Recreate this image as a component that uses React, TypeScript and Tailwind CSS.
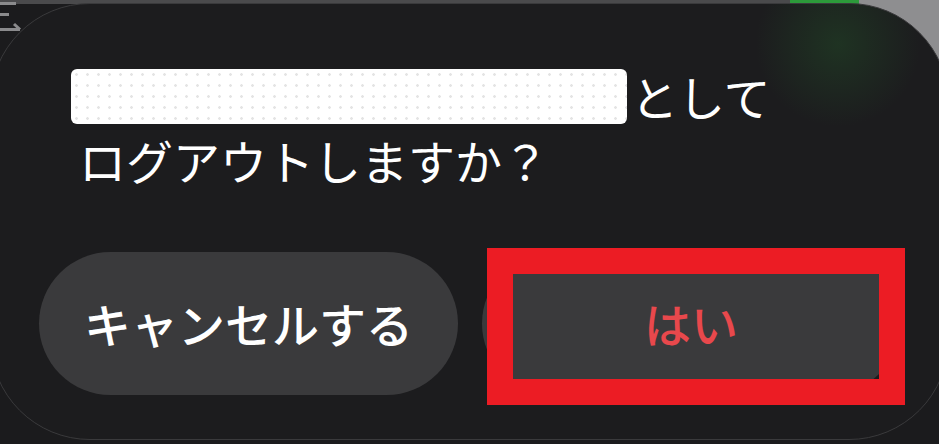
import React from "react";

const LogoutDialog = ({ email }: { email: string }) => {
  return (
    <div className="relative z-10 -ml-[10px] mt-[3px] w-[959px] h-[437px] rounded-[100px] border border-[#3a3a3c] bg-[#1c1c1e] overflow-hidden flex flex-col">
      {/* faint green glow from the status icon behind */}
      <div className="absolute right-[20px] top-[-50px] w-[180px] h-[180px] rounded-full bg-[radial-gradient(circle,rgba(38,110,46,0.28)_0%,rgba(28,28,30,0)_65%)] pointer-events-none" />
      <div className="relative pl-[88px] pt-[60px] text-[47px] leading-[64px] text-white">
        <div className="flex items-center">
          <span
            aria-label={email}
            className="-ml-[8px] mr-[4px] inline-block w-[556px] h-[55px] rounded-md bg-white bg-[radial-gradient(circle,#e4e4e4_1px,transparent_1.6px)] bg-[length:11px_11px]"
          />
          <span>として</span>
        </div>
        <div>ログアウトしますか？</div>
      </div>
      <div className="relative mt-[60px] px-[48px] flex flex-row gap-[24px]">
        <button className="w-[420px] h-[143px] rounded-full bg-[#3a3a3c] text-white text-[47px] font-medium">
          キャンセルする
        </button>
        <div className="relative w-[419px] h-[143px]">
          <button className="w-full h-full rounded-full bg-[#3a3a3c] text-[#e8484c] text-[47px] font-medium">
            はい
          </button>
          {/* annotation box over the yes button */}
          <div className="absolute left-[5px] top-[-4px] w-[418px] h-[157px] border-[26px] border-[#ec1c24] pointer-events-none" />
        </div>
      </div>
    </div>
  );
};

export default function App() {
  return (
    <div
      className="relative w-[939px] h-[444px] overflow-hidden bg-[#1b1b1d]"
      style={{ fontFamily: '"Noto Sans CJK JP", "Noto Sans", sans-serif' }}
    >
      {/* page behind the dialog */}
      <div className="absolute inset-x-0 top-0 h-[4px] bg-[linear-gradient(to_right,#4a4a4c_790px,#2c9a3a_790px,#2c9a3a_875px,#8e8e90_875px)]" />
      <div className="absolute right-0 top-0 w-[80px] h-[80px] bg-[#8e8e90]" />
      <svg className="absolute left-0 top-0" width="22" height="34" viewBox="0 0 22 34">
        <g stroke="#8a8a8c" strokeWidth="3" fill="none">
          <path d="M0 3.5h16" />
          <path d="M0 14.5h9" />
          <path d="M0 29.5h20M14 24l6 5.5" />
        </g>
      </svg>
      <LogoutDialog email="user@example.com" />
    </div>
  );
}
